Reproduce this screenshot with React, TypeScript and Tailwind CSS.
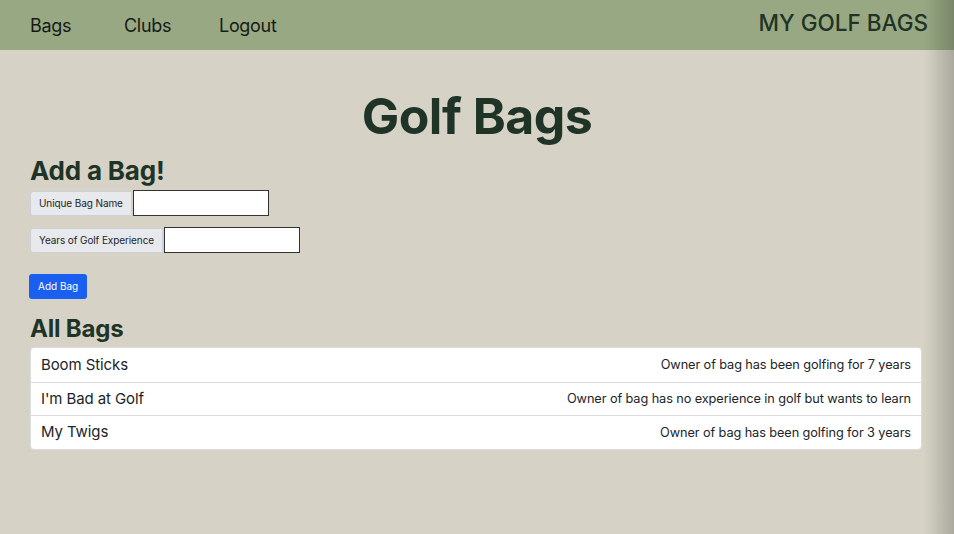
import React from 'react'

type Bag = {
  name: string
  note: string
}

const bags: Bag[] = [
  { name: 'Boom Sticks', note: 'Owner of bag has been golfing for 7 years' },
  { name: "I'm Bad at Golf", note: 'Owner of bag has no experience in golf but wants to learn' },
  { name: 'My Twigs', note: 'Owner of bag has been golfing for 3 years' },
]

const Field: React.FC<{ label: string }> = ({ label }) => (
  <div className="flex items-center">
    <span className="flex h-[25px] items-center rounded-l-[3px] border border-[#ccd1d8] bg-[#e7e9ec] px-[8px] text-[10px] tracking-[-0.1px] text-[#212529]">
      {label}
    </span>
    <input className="ml-px h-[26px] w-[136px] border border-[#333] bg-white" />
  </div>
)

export default function App() {
  return (
    <div
      className="relative min-h-[534px] w-full overflow-hidden bg-[#d6d3c6]"
      style={{ fontFamily: 'Inter, "Noto Sans", sans-serif' }}
    >
      <nav className="flex h-[50px] items-center justify-between bg-[#98a883] pl-[30px] pr-[26px]">
        <div className="flex items-center text-[18px] tracking-[-0.3px] text-[#151a15]">
          <span className="w-[94px]">Bags</span>
          <span className="w-[95px]">Clubs</span>
          <span>Logout</span>
        </div>
        <span className="-mt-[5px] text-[22.5px] font-medium text-[#1f3326]">MY GOLF BAGS</span>
      </nav>

      <main className="px-[30px]">
        <h1 className="mt-[36px] text-center text-[50px] font-bold leading-[60px] tracking-[-0.5px] text-[#1f3326]">
          Golf Bags
        </h1>

        <h2 className="mt-[10px] text-[26px] font-bold leading-[30px] tracking-[-0.2px] text-[#1f3326]">Add a Bag!</h2>

        <div className="mt-[4px] flex flex-col gap-[11px]">
          <Field label="Unique Bag Name" />
          <Field label="Years of Golf Experience" />
        </div>

        <button className="-ml-px mt-[21px] h-[25px] rounded-[3px] bg-[#1a5ff0] px-[9px] text-[10px] text-white">
          Add Bag
        </button>

        <h2 className="mt-[14px] text-[24px] font-bold leading-[32px] tracking-[-0.2px] text-[#1f3326]">All Bags</h2>

        <ul className="mt-[2px] mr-[2px] overflow-hidden rounded-[4px] border border-[#dcdcdc] bg-white">
          {bags.map((bag, i) => (
            <li
              key={bag.name}
              className={`flex h-[33.5px] items-center justify-between pl-[10px] pr-[10px] ${i > 0 ? 'border-t border-[#dcdcdc]' : ''}`}
            >
              <span className="text-[15px] tracking-[-0.1px] text-[#212529]">{bag.name}</span>
              <span className="text-[12.75px] tracking-[-0.1px] text-[#212529]">{bag.note}</span>
            </li>
          ))}
        </ul>
      </main>

      {/* shade at the right edge */}
      <div className="pointer-events-none absolute inset-y-0 right-0 w-[30px] bg-gradient-to-r from-transparent to-black/20" />
    </div>
  )
}
